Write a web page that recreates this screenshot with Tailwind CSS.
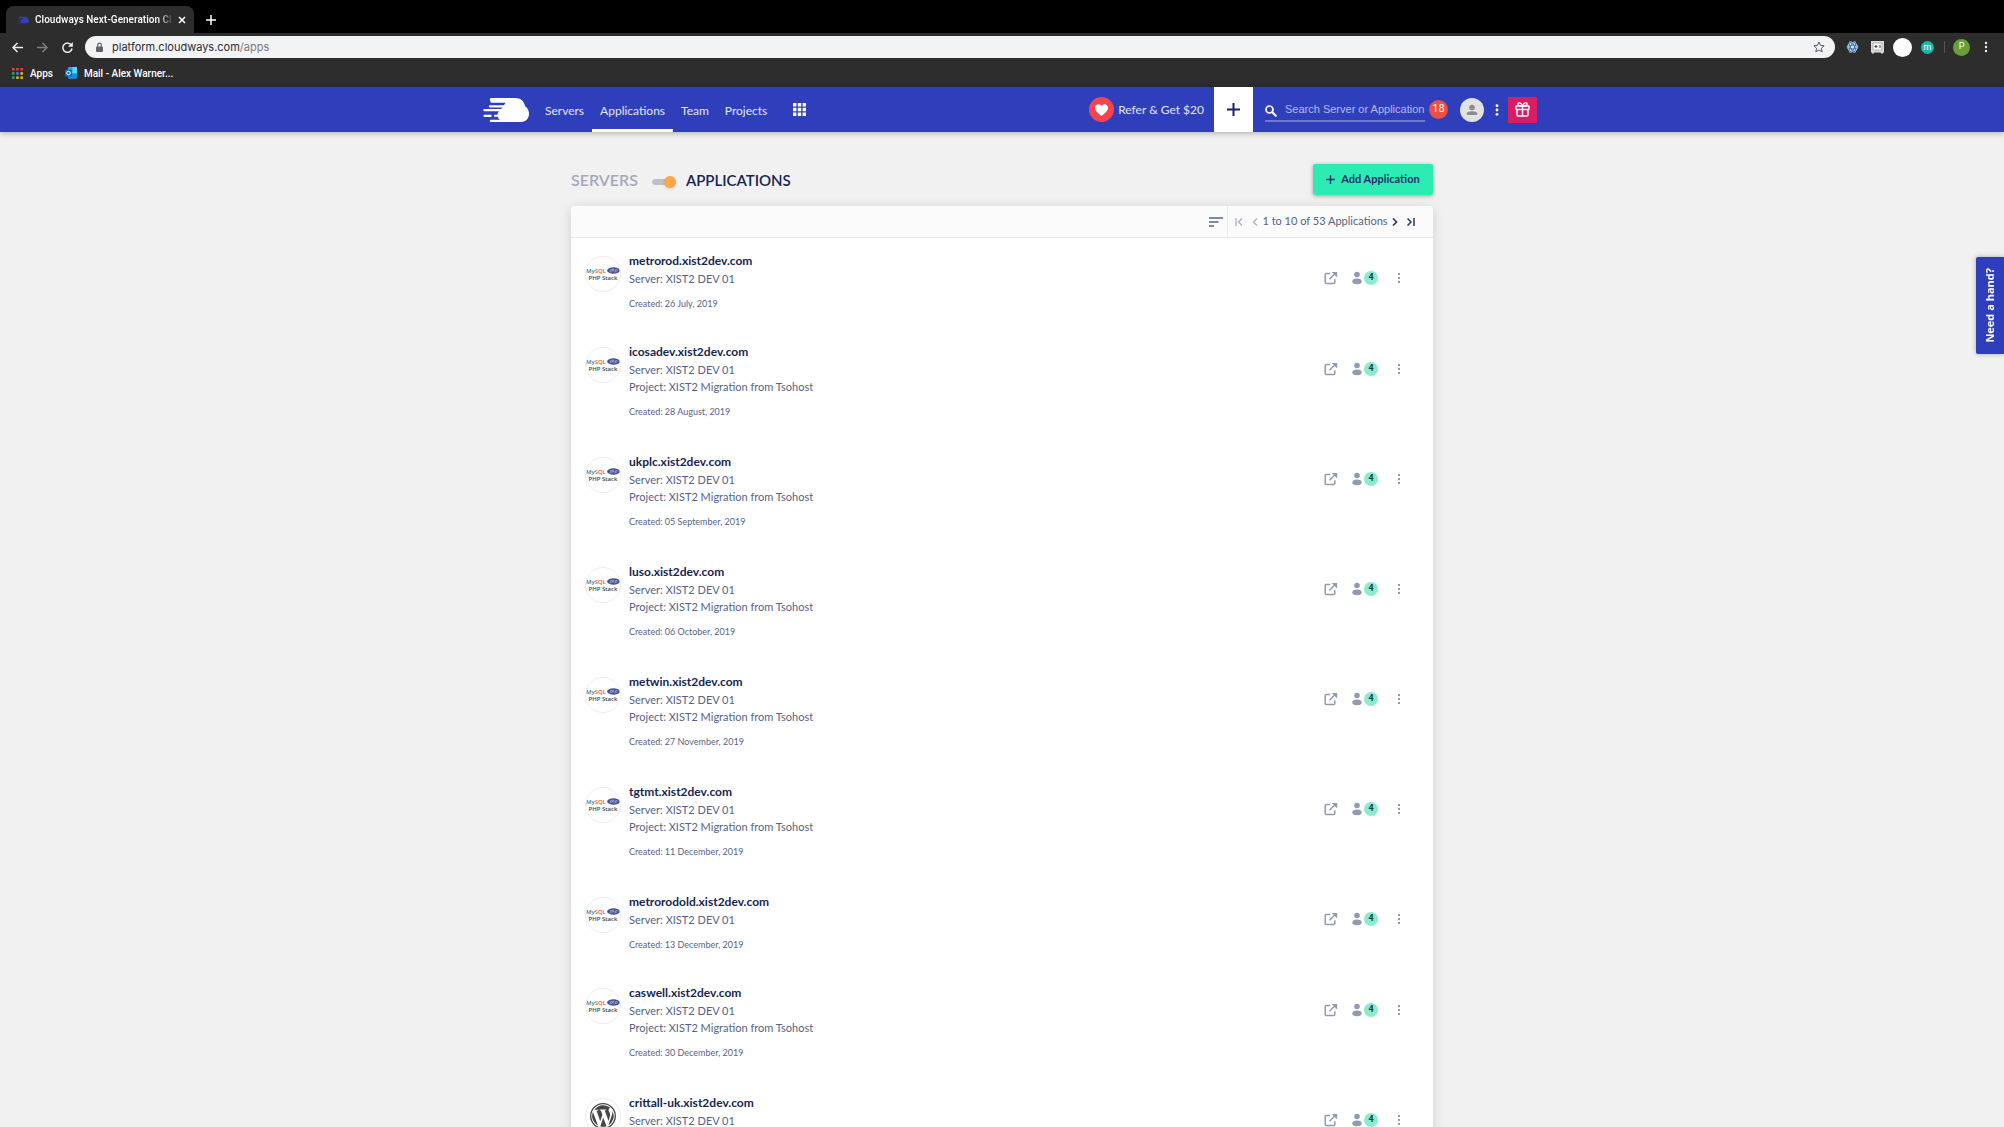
<!DOCTYPE html>
<html lang="en">
<head>
<meta charset="utf-8">
<title>Cloudways Next-Generation Cloud</title>
<script src="https://cdn.jsdelivr.net/npm/@tailwindcss/browser@4"></script>
</head>
<body class="flex h-screen flex-col overflow-hidden bg-[#f1f1f1] font-['Lato',sans-serif] text-[#566385]">

<!-- Shared symbols -->
<svg class="hidden">
  <symbol id="cloud" viewBox="0 0 46 26">
    <path fill="currentColor" d="M8 1h24c6 0 9 3 10 8 3 2 4 5 4 8 0 5-4 8-8 8H8c-1.500 0-1.500-2.200 0-2.200h9c-1.500-1-2-2-2.300-3H11v-2h3.500c.2-1.500.7-2.500 1.500-3.500H1.500c-1.500 0-1.500-2.200 0-2.200H18l1.500-1.700H7c-1.500 0-1.500-2.200 0-2.200h14l1.500-2.500H8C6.500 3.200 6.500 1 8 1z"/>
    <path fill="currentColor" d="M1.500 17.700h7v2.200h-7c-1.500 0-1.500-2.200 0-2.200z"/>
  </symbol>
  <symbol id="person" viewBox="0 0 10 14">
    <circle cx="5" cy="3.500" r="2.800" fill="currentColor"/>
    <ellipse cx="5" cy="10.300" rx="4.700" ry="2.900" fill="currentColor"/>
  </symbol>
  <symbol id="open" viewBox="0 0 14 14">
    <path fill="none" stroke="currentColor" stroke-width="1.500" d="M6.200 2.500H2.200a1 1 0 0 0-1 1v8a1 1 0 0 0 1 1h7.600a1 1 0 0 0 1-1V8.200M5.500 8.300l5.500-5.500"/>
    <path fill="currentColor" d="M7.700 1H13.200V6.500z"/>
  </symbol>
  <symbol id="dots" viewBox="0 0 4 14">
    <g fill="currentColor"><rect x="1" y="2" width="2" height="2"/><rect x="1" y="6" width="2" height="2"/><rect x="1" y="10" width="2" height="2"/></g>
  </symbol>
</svg>

<!-- Browser chrome -->
<header class="shrink-0 bg-[#2d2d2d] font-['Roboto',sans-serif] text-white">
  <div class="flex h-[33px] items-end bg-black pl-1.5">
    <div class="flex h-[27px] w-[188px] items-center rounded-t-lg bg-[#2d2d2d] pr-2 pl-[11px] text-[10px] font-semibold">
      <svg class="mr-1.5 h-2 w-3 shrink-0 text-[#2f3fc0]"><use href="#cloud"/></svg>
      <span class="flex-1 overflow-hidden whitespace-nowrap bg-linear-to-r from-white from-90% to-white/10 bg-clip-text text-transparent">Cloudways Next-Generation Cl</span>
      <button aria-label="Close tab" class="ml-1.5"><svg class="size-2" viewBox="0 0 8 8"><path d="M1 1l6 6M7 1L1 7" stroke="white" stroke-width="1.500"/></svg></button>
    </div>
    <button aria-label="New tab" class="mb-2 ml-3"><svg class="size-[10px]" viewBox="0 0 10 10"><path d="M5 0v10M0 5h10" stroke="white" stroke-width="1.500"/></svg></button>
  </div>
  <div class="flex h-7 items-center pr-4 pl-3">
    <button aria-label="Back"><svg class="size-[11px]" viewBox="0 0 11 11"><path d="M11 5.500H1M5.500 1L1 5.500 5.500 10" fill="none" stroke="#eee" stroke-width="1.500"/></svg></button>
    <button aria-label="Forward" class="ml-3.5"><svg class="size-[11px]" viewBox="0 0 11 11"><path d="M0 5.500h10M5.500 1L10 5.500 5.500 10" fill="none" stroke="#808080" stroke-width="1.500"/></svg></button>
    <button aria-label="Reload" class="ml-3.5"><svg class="size-[11px]" viewBox="0 0 11 11"><path d="M9.500 3.500A4.600 4.600 0 1 0 10 6.500" fill="none" stroke="#eee" stroke-width="1.500"/><path d="M10.800 0v4.800H6z" fill="#eee"/></svg></button>
    <label class="ml-3 flex h-[22px] flex-1 items-center rounded-full bg-[#f1f3f4] px-2.5 font-['Inter',sans-serif] text-[11px] text-[#2b2e33]">
      <svg class="mr-2 h-[11px] w-[9px]" viewBox="0 0 9 11"><rect x="1" y="4.500" width="7" height="5.500" rx="1" fill="#5f6368"/><path d="M2.700 5V3a1.800 1.800 0 0 1 3.600 0v2" fill="none" stroke="#5f6368" stroke-width="1.200"/></svg>
      <span>platform.cloudways.com<span class="text-[#777b80]">/apps</span></span>
      <svg class="ml-auto size-3" viewBox="0 0 12 12"><path d="M6 1l1.500 3.400 3.600.4-2.700 2.400.8 3.600L6 9l-3.200 1.800.8-3.600L.9 4.800l3.600-.4z" fill="none" stroke="#55585c"/></svg>
    </label>
    <svg class="ml-[11px] h-3 w-[13px]" viewBox="0 0 13 12"><path d="M3.500.5h2l1 1 1-1h2l1 2.500 2 3-2 3-1 2.500h-2l-1-1-1 1h-2l-1-2.500-2-3 2-3z" fill="#dbe8f7"/><g fill="none" stroke="#2f6fb5" stroke-width=".9"><ellipse cx="6.500" cy="6" rx="5" ry="2"/><ellipse cx="6.500" cy="6" rx="5" ry="2" transform="rotate(60 6.500 6)"/><ellipse cx="6.500" cy="6" rx="5" ry="2" transform="rotate(120 6.500 6)"/></g></svg>
    <svg class="ml-3 size-[13px]" viewBox="0 0 13 13"><path d="M0 0h13v11l-2 2-1.500-1.500h-6L2 13l-2-2z" fill="#d9d9d9"/><path d="M2 2h9v7H2z" fill="#f4f4f4" stroke="#999" stroke-width=".6"/><path d="M5 4v3M3.500 5.500h3M9 4v3" stroke="#444"/></svg>
    <span class="ml-[9px] size-[19px] rounded-full bg-white"></span>
    <span class="ml-[9px] flex size-[13px] items-center justify-center rounded-full bg-[#1fb5ac] text-[9px] leading-none">m</span>
    <span class="ml-2.5 h-3 w-px bg-[#555]"></span>
    <button class="ml-2 flex size-[17px] items-center justify-center rounded-full bg-[#689f38] text-[9px]">P</button>
    <button aria-label="Browser menu" class="ml-[14px]"><svg class="h-3 w-1" viewBox="0 0 4 12"><g fill="#eee"><circle cx="2" cy="2" r="1.200"/><circle cx="2" cy="6" r="1.200"/><circle cx="2" cy="10" r="1.200"/></g></svg></button>
  </div>
  <div class="flex h-[26px] items-center pb-0.5 pl-3 text-[10px] font-medium">
    <svg class="size-[11px]" viewBox="0 0 11 11"><g fill="#ea4335"><rect width="2.500" height="2.500"/><rect x="4.200" width="2.500" height="2.500"/><rect x="8.400" width="2.500" height="2.500"/></g><rect y="4.200" width="2.500" height="2.500" fill="#34a853"/><rect x="4.200" y="4.200" width="2.500" height="2.500" fill="#4285f4"/><rect x="8.400" y="4.200" width="2.500" height="2.500" fill="#fbbc05"/><rect y="8.400" width="2.500" height="2.500" fill="#34a853"/><g fill="#fbbc05"><rect x="4.200" y="8.400" width="2.500" height="2.500"/><rect x="8.400" y="8.400" width="2.500" height="2.500"/></g></svg>
    <a href="#" class="ml-[7px]">Apps</a>
    <svg class="ml-3 size-3" viewBox="0 0 12 12"><rect x="3" width="9" height="11.500" rx="1" fill="#28a8ea"/><path d="M7.500 0H12v6H7.500z" fill="#50d9ff"/><path d="M3 7l9 0v4.500H3z" fill="#1490df"/><rect y="2.500" width="7" height="7" rx="1" fill="#0f6cbd"/><circle cx="3.500" cy="6" r="1.800" fill="none" stroke="white"/></svg>
    <a href="#" class="ml-[7px]">Mail - Alex Warner...</a>
  </div>
</header>

<!-- Application navigation -->
<nav class="z-10 shrink-0 bg-[#2f3fbc] text-white shadow-[0_1px_6px_rgba(0,0,0,0.3)]">
  <div class="mx-auto flex h-[45px] max-w-[1070px] items-center pl-4">
    <a href="#" aria-label="Cloudways"><svg class="h-[26px] w-[46px]"><use href="#cloud"/></svg></a>
    <div class="ml-2 flex h-full items-stretch text-xs text-[#e4e6f8]">
      <a href="#" class="flex items-center px-2 pt-0.5">Servers</a>
      <a href="#" class="flex items-center border-b-[3px] border-white px-2 pt-[5px]">Applications</a>
      <a href="#" class="flex items-center px-2 pt-0.5">Team</a>
      <a href="#" class="flex items-center px-2 pt-0.5">Projects</a>
    </div>
    <button aria-label="Product menu" class="ml-[18px]"><svg class="size-[13px]" viewBox="0 0 13 13" fill="white"><path d="M0 0h3.400v3.400H0zM4.800 0h3.400v3.400H4.800zM9.600 0H13v3.400H9.600zM0 4.800h3.400v3.400H0zM4.800 4.800h3.400v3.400H4.800zM9.600 4.800H13v3.400H9.600zM0 9.600h3.400V13H0zM4.800 9.600h3.400V13H4.800zM9.600 9.600H13V13H9.600z"/></svg></button>
    <a href="#" class="ml-auto flex items-center gap-1 text-xs text-[#e4e6f8]">
      <svg class="size-[25px]" viewBox="0 0 25 25"><circle cx="12.500" cy="12.500" r="12.500" fill="#f5444f"/><path d="M12.500 19C8 15.500 6 13.500 6 10.800 6 7.200 10.500 5.800 12.500 9c2-3.200 6.500-1.800 6.500 1.800 0 2.700-2 4.700-6.500 8.200z" fill="white"/></svg>
      Refer &amp; Get $20
    </a>
    <button aria-label="Add" class="ml-2.5 flex h-full w-[39px] items-center justify-center bg-white"><svg class="size-[13px]" viewBox="0 0 13 13"><path d="M6.500 0v13M0 6.500h13" stroke="#16216a" stroke-width="2"/></svg></button>
    <label class="ml-3 flex h-6 w-[160px] items-center border-b-2 border-white/30">
      <svg class="mt-1 size-3 shrink-0" viewBox="0 0 12 12"><circle cx="4.500" cy="4.500" r="3.500" fill="none" stroke="white" stroke-width="1.700"/><path d="M7 7l4.500 4.500" stroke="white" stroke-width="2"/></svg>
      <input type="text" aria-label="Search" placeholder="Search Server or Application" class="ml-2 w-full min-w-0 bg-transparent pt-0.5 font-['Liberation_Sans',sans-serif] text-[11px] text-white placeholder:text-[#b6bce8] outline-none">
    </label>
    <button class="ml-1 flex size-[19px] items-center justify-center rounded-full bg-[#ec5043] font-['Roboto',sans-serif] text-[11px]">18</button>
    <button aria-label="Account" class="ml-3 flex size-6 items-center justify-center rounded-full bg-[#e2e2e2]"><svg class="size-3" viewBox="0 0 12 12" fill="#8d8d8d"><circle cx="6" cy="3.500" r="2.800"/><path d="M.8 11V9.500c0-3 10.400-3 10.400 0V11z"/></svg></button>
    <button aria-label="More" class="ml-[11px]"><svg class="h-3 w-1" viewBox="0 0 4 12" fill="white"><circle cx="2" cy="1.700" r="1.400"/><circle cx="2" cy="6" r="1.400"/><circle cx="2" cy="10.300" r="1.400"/></svg></button>
    <button aria-label="Offers" class="ml-[9px] flex h-[26px] w-[29px] items-center justify-center bg-[#d91c66]"><svg class="size-[15px]" viewBox="0 0 15 15" fill="none" stroke="white" stroke-width="1.400"><rect x="1" y="4" width="13" height="3.500" rx=".5"/><path d="M2 7.500V13a1 1 0 0 0 1 1h9a1 1 0 0 0 1-1V7.500M7.500 4v10M7.500 4C6 0 2.500 0 3 2.500 3.300 3.700 5 4 7.500 4c2.500 0 4.200-.3 4.500-1.500C12.500 0 9 0 7.500 4"/></svg></button>
  </div>
</nav>

<!-- Application list -->
<main class="min-h-0 flex-1 overflow-hidden">
  <div class="mx-auto max-w-[862px] pt-8">
    <div class="flex items-start">
      <div class="flex h-8 items-center text-base font-semibold">
        <span class="text-[#a3a9bb]">SERVERS</span>
        <label class="relative ml-3.5 mt-1 flex h-3 w-6 items-center">
          <input type="checkbox" role="switch" checked aria-label="Show applications" class="h-1.5 w-full appearance-none rounded-full bg-[#bcc1d0]">
          <span class="absolute right-0 size-3 rounded-full bg-[#fda74c] shadow-sm"></span>
        </label>
        <h1 class="ml-2.5 text-[15px] text-[#16254f]">APPLICATIONS</h1>
      </div>
      <button class="ml-auto flex h-[31px] w-[120px] items-center justify-center gap-1.5 rounded-xs bg-[#2cecb4] text-[11px] font-bold text-[#1c2f6e] shadow-[0_1px_4px_rgba(0,0,0,0.35)]">
        <svg class="size-[9px]" viewBox="0 0 9 9"><path d="M4.500 0v9M0 4.500h9" stroke="#1c2f6e" stroke-width="1.400"/></svg>Add Application
      </button>
    </div>
    <section class="mt-2.5 rounded-t-sm bg-white shadow-[0_2px_12px_rgba(0,0,0,0.14)]">
      <div class="flex h-8 items-stretch justify-end rounded-t-sm border-b border-[#e8e8ea] bg-[#fbfbfb] pr-[18px]">
        <button aria-label="Sort" class="border-r border-[#ebebed] pr-1"><svg class="h-2.5 w-3.5" viewBox="0 0 14 10"><path d="M0 1h14M0 5h9.500M0 9h5" stroke="#57648a" stroke-width="1.600"/></svg></button>
        <div class="flex items-center pl-[7px] text-[11px]">
          <button aria-label="First page"><svg class="h-2 w-2" viewBox="0 0 8 8" fill="none" stroke="#a9afc0" stroke-width="1.300"><path d="M1 0v8M7 .5L3.500 4 7 7.500"/></svg></button>
          <button aria-label="Previous page" class="ml-2"><svg class="h-2 w-2" viewBox="0 0 8 8" fill="none" stroke="#a9afc0" stroke-width="1.300"><path d="M6 .5L2.500 4 6 7.500"/></svg></button>
          <span class="w-[132px] whitespace-nowrap text-center">1 to 10 of 53 Applications</span>
          <button aria-label="Next page"><svg class="h-2 w-2" viewBox="0 0 8 8" fill="none" stroke="#2a3763" stroke-width="1.600"><path d="M2 .5L5.500 4 2 7.500"/></svg></button>
          <button aria-label="Last page" class="ml-2"><svg class="h-2 w-2" viewBox="0 0 8 8" fill="none" stroke="#2a3763" stroke-width="1.500"><path d="M.5 .5L4 4 .5 7.500M7 0v8"/></svg></button>
        </div>
      </div>
      <ul id="apps"></ul>
    </section>
  </div>
</main>

<button class="absolute top-[257px] right-0 flex h-[97px] w-7 items-center justify-center rounded-l-xs bg-[#2f3fbc] font-['Open_Sans',sans-serif] text-[11px] font-bold text-white shadow-[0_0_5px_rgba(0,0,0,0.3)]"><span class="rotate-180 [writing-mode:vertical-rl]">Need a hand?</span></button>

<script>
const apps = [
  ['metrorod', '26 July, 2019', false],
  ['icosadev', '28 August, 2019', true],
  ['ukplc', '05 September, 2019', true],
  ['luso', '06 October, 2019', true],
  ['metwin', '27 November, 2019', true],
  ['tgtmt', '11 December, 2019', true],
  ['metrorodold', '13 December, 2019', false],
  ['caswell', '30 December, 2019', true],
  ['crittall-uk', '30 December, 2019', true, 'wp'],
];
const php = `<span class="flex flex-col items-center font-['Open_Sans',sans-serif] leading-none">
  <span class="flex items-center gap-px text-[6px] font-semibold"><span class="text-[#2f7c95]">My<span class="text-[#f0512d]">SQL</span></span>
  <svg class="h-[7px] w-[13px]" viewBox="0 0 13 7"><ellipse cx="6.500" cy="3.500" rx="6.400" ry="3.300" fill="#4a548f"/><path d="M3 5.500l.7-3h1.200q.8.700-.1 1.700H3.500M6 1.500l-.7 3M5.800 2.600h1.200l-.4 1.900M8 5.500l.7-3h1.200q.8.700-.1 1.700H8.500" fill="none" stroke="#a9b0d8" stroke-width=".7"/></svg></span>
  <span class="mt-px text-[6px] font-semibold whitespace-nowrap text-[#444]">PHP Stack</span></span>`;
const wp = `<svg class="size-[26px]" viewBox="0 0 26 26"><circle cx="13" cy="13" r="12.300" fill="#fff" stroke="#464646" stroke-width="1.300"/><path fill="#464646" d="M4 7.500A10.800 10.800 0 0 1 20.500 5c-1.600.3-2.300 1.600-1.800 3 .6 1.400 1.800 2.500 1.300 5l-1.500 5-3.700-10.500 1.300-.3v-.8H9.500v.8l1.400.3 1.500 4.200-2.200 6.500L6.600 7.700l1.400-.3v-.8L4 7zM2.900 9l5.200 13.700A10.800 10.800 0 0 1 2.900 9zM13.200 14.500l3.300 8.700a10.800 10.800 0 0 1-6.200.2zM22.500 8a10.800 10.800 0 0 1-4.200 14.300l3.400-9.600c.6-1.700.9-3.200.8-4.700z"/></svg>`;
document.getElementById('apps').innerHTML = apps.map(([name, date, project, kind]) => `
<li class="flex items-start pt-3.5 pr-8 pl-3.5 ${project ? 'min-h-[110px]' : 'min-h-[91px]'}">
  <span class="mt-1 flex size-9 shrink-0 items-center justify-center overflow-hidden rounded-full border border-[#ececec] bg-white">${kind ? wp : php}</span>
  <div class="ml-2 flex-1 text-[11px] leading-[17px]">
    <a href="#" class="block text-xs leading-[18px] font-bold text-[#16254f]">${name}.xist2dev.com</a>
    <p>Server: XIST2 DEV 01</p>
    ${project ? '<p>Project: XIST2 Migration from Tsohost</p>' : ''}
    <p class="mt-2 text-[9px] leading-[18px]">Created: ${date}</p>
  </div>
  <div class="mt-[19px] flex items-center text-[#929aae]">
    <button aria-label="Open application"><svg class="size-3.5"><use href="#open"/></svg></button>
    <button class="ml-3.5 flex items-center gap-0.5" aria-label="Team members"><svg class="h-3.5 w-2.5"><use href="#person"/></svg><span class="flex size-3.5 items-center justify-center rounded-full bg-[#8aeccb] font-['Roboto',sans-serif] text-[9px] font-bold text-[#1d3a4a]">4</span></button>
    <button aria-label="Application menu" class="ml-[19px]"><svg class="h-3.5 w-1"><use href="#dots"/></svg></button>
  </div>
</li>`).join('');
</script>
</body>
</html>
